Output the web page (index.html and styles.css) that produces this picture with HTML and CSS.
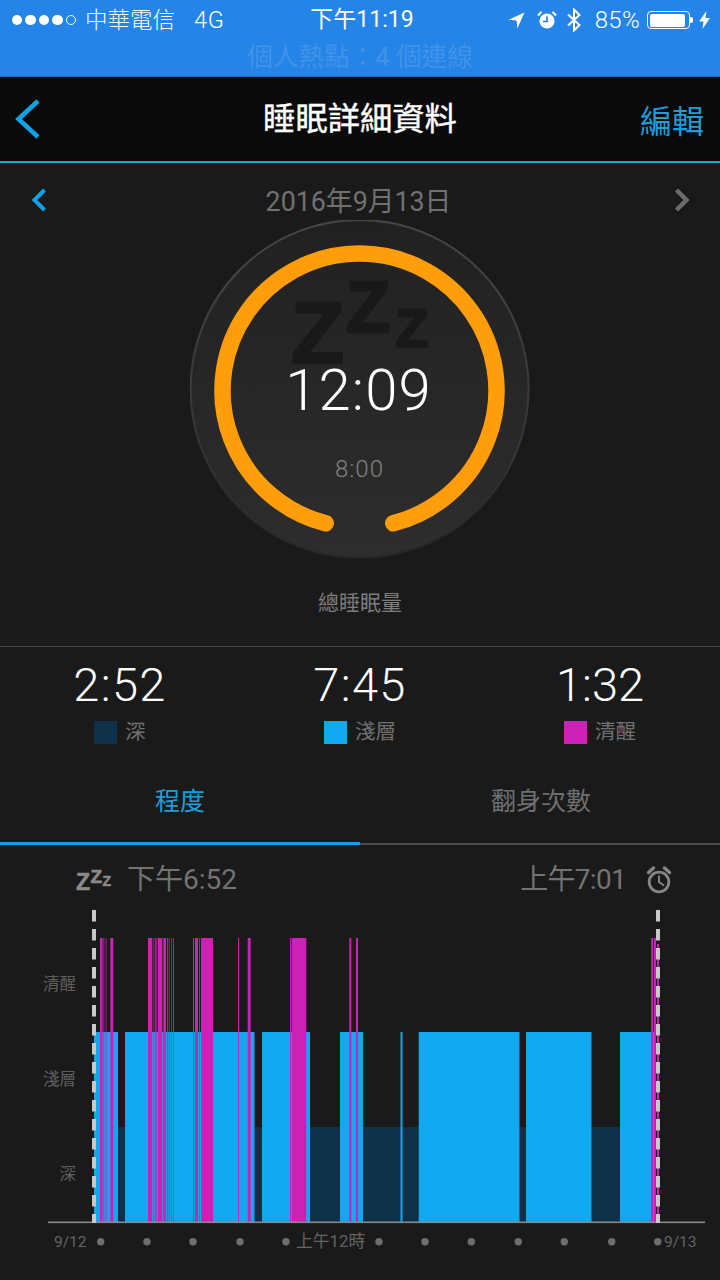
FILE: index.html
```html
<!DOCTYPE html>
<html lang="zh-Hant">
<head>
<meta charset="utf-8">
<title>睡眠詳細資料</title>
<link rel="stylesheet" href="styles.css">
</head>
<body>
<div class="app">
  <header class="system">
    <div class="status">
      <div class="status-left">
        <span class="signal"><i></i><i></i><i></i><i></i><i class="off"></i></span>
        <span class="carrier">中華電信</span>
        <span class="net">4G</span>
      </div>
      <div class="clock">下午11:19</div>
      <div class="status-right">
        <svg class="ic-loc" width="17" height="17" viewBox="0 0 17 17"><path d="M16.500 .5 L.5 7.800 L8.600 8.400 L9.400 16.500 Z" fill="#fff"/></svg>
        <svg class="ic-alarm" width="20" height="20" viewBox="0 0 20 20"><circle cx="10" cy="11" r="7.600" fill="#fff"/><path d="M10 6.500V11.500H6" fill="none" stroke="#2484e8" stroke-width="1.700"/><path d="M1 5.500 L4.500 1.800 M19 5.500 L15.500 1.800" stroke="#fff" stroke-width="2"/></svg>
        <svg class="ic-bt" width="14" height="24" viewBox="0 0 14 24"><path d="M1 6.500 L12.500 17 L7 22.500 V1.500 L12.500 7 L1 17.500" fill="none" stroke="#fff" stroke-width="2"/></svg>
        <span class="pct">85%</span>
        <span class="battery"><span class="battery-fill"></span></span>
        <svg class="ic-bolt" width="11" height="18" viewBox="0 0 11 18"><path d="M7.500 0 L0 10.500 H4.500 L3.500 18 L11 7 H6.500 Z" fill="#fff"/></svg>
      </div>
    </div>
    <div class="hotspot">個人熱點：4 個連線</div>
  </header>

  <nav class="nav">
    <svg width="60" height="84" viewBox="0 0 60 84"><path d="M38 24 L18.500 42 L38 60" fill="none" stroke="#10a2e6" stroke-width="4.600"/></svg>
    <h1 class="title">睡眠詳細資料</h1>
    <span class="edit">編輯</span>
  </nav>

  <section class="date-row">
    <svg width="30" height="30" viewBox="0 0 30 30"><path d="M14.500 5 L4.500 15 L14.500 25" fill="none" stroke="#10a2e6" stroke-width="4"/></svg>
    <span class="date">2016年9月13日</span>
    <svg width="30" height="30" viewBox="0 0 30 30"><path d="M15.500 5 L25.500 15 L15.500 25" fill="none" stroke="#6c6c6c" stroke-width="4.400"/></svg>
  </section>

  <section class="gauge-wrap">
    <div class="gauge">
      <svg class="gauge-art" width="340" height="340" viewBox="0 0 340 340">
        <defs>
          <linearGradient id="face" x1="0" y1="0" x2="0" y2="1"><stop offset="0" stop-color="#212121"/><stop offset="1" stop-color="#2d2d2d"/></linearGradient>
          <linearGradient id="rim" x1="0" y1="0" x2="0" y2="1"><stop offset="0" stop-color="#464646"/><stop offset=".6" stop-color="#383838"/><stop offset="1" stop-color="#262626"/></linearGradient>
        </defs>
        <circle cx="169.600" cy="169" r="169" fill="url(#face)" stroke="url(#rim)" stroke-width="2"/>
        <text class="big-z" x="101" y="143" font-size="87">Z</text>
        <text class="big-z" x="156" y="112" font-size="72">Z</text>
        <text class="big-z" x="205.500" y="127" font-size="54">Z</text>
        <path d="M135.700 303.300 A137 137 0 1 1 203.300 303.300" fill="none" stroke="#ff9d0b" stroke-width="16.500" stroke-linecap="round"/>
      </svg>
      <div class="gauge-text">
        <div class="gauge-time">12:09</div>
        <div class="gauge-goal">8:00</div>
      </div>
    </div>
  </section>
  <div class="total">總睡眠量</div>

  <section class="stats">
    <div class="stat"><div class="stat-value">2:52</div><div class="stat-key"><i class="swatch deep"></i><span>深</span></div></div>
    <div class="stat"><div class="stat-value">7:45</div><div class="stat-key"><i class="swatch light"></i><span>淺層</span></div></div>
    <div class="stat"><div class="stat-value tight">1:32</div><div class="stat-key"><i class="swatch awake"></i><span>清醒</span></div></div>
  </section>

  <div class="tabs">
    <div class="tab active">程度</div>
    <div class="tab">翻身次數</div>
  </div>

  <section class="chart-head">
    <div class="chart-side">
      <svg width="36" height="28" viewBox="0 0 36 28"><g class="small-z"><text x="0" y="24" font-size="23">Z</text><text x="14.500" y="17" font-size="19">Z</text><text x="26.500" y="20" font-size="14">Z</text></g></svg>
      <span>下午6:52</span>
    </div>
    <div class="chart-side">
      <span class="end-time">上午7:01</span>
      <svg width="26" height="30" viewBox="0 0 26 30"><circle cx="13" cy="17" r="9.800" fill="none" stroke="#858585" stroke-width="2.800"/><path d="M13 10.500V17L18 20.500" fill="none" stroke="#858585" stroke-width="2"/><path d="M2.500 7.500 L7.500 3 M23.500 7.500 L18.500 3" stroke="#858585" stroke-width="3.400" stroke-linecap="round"/></svg>
    </div>
  </section>

  <svg class="chart" width="720" height="380" viewBox="0 900 720 380">
    <g class="axis-y">
      <text x="76" y="990">清醒</text>
      <text x="76" y="1085">淺層</text>
      <text x="76" y="1180">深</text>
    </g>
    <rect class="deep-fill" x="118" y="1127" width="502" height="95"/>
    <g class="light-fill">
      <rect x="94" y="1032" width="24" height="190"/>
      <rect x="125" y="1032" width="129.500" height="190"/>
      <rect x="262" y="1032" width="48" height="190"/>
      <rect x="340" y="1032" width="23" height="190"/>
      <rect x="400.500" y="1032" width="2" height="190"/>
      <rect x="418.700" y="1032" width="100.800" height="190"/>
      <rect x="526" y="1032" width="65.500" height="190"/>
      <rect x="620" y="1032" width="34" height="190"/>
    </g>
    <g class="awake-fill">
      <rect x="100" y="938" width="2.600" height="284"/>
      <rect x="103" y="938" width=".8" height="284" opacity=".7"/>
      <rect x="104.500" y="938" width="1" height="284" opacity=".6"/>
      <rect x="106.300" y="938" width=".8" height="284" opacity=".6"/>
      <rect x="110.300" y="938" width="3" height="284"/>
      <rect x="148" y="938" width="4.300" height="284"/>
      <rect x="153" y="938" width=".8" height="284" opacity=".7"/>
      <rect x="154.700" y="938" width="2" height="284" opacity=".8"/>
      <rect x="157.700" y="938" width="4.600" height="284"/>
      <rect x="163.300" y="938" width="2.700" height="284"/>
      <rect x="167" y="938" width=".8" height="284"/>
      <rect x="168.700" y="938" width="1" height="284" opacity=".8"/>
      <rect x="171" y="938" width=".8" height="284" opacity=".8"/>
      <rect x="173" y="938" width="1" height="284" opacity=".8"/>
      <rect x="193" y="938" width="1" height="284"/>
      <rect x="195" y="938" width="3" height="284"/>
      <rect x="199" y="938" width="1" height="284" opacity=".8"/>
      <rect x="201" y="938" width="12" height="284"/>
      <rect x="238" y="938" width="1" height="284"/>
      <rect x="247.700" y="938" width="3" height="284"/>
      <rect x="290" y="938" width="1.300" height="284"/>
      <rect x="292" y="938" width="14.300" height="284"/>
      <rect x="349.300" y="938" width="2" height="284"/>
      <rect x="356" y="938" width="2" height="284"/>
      <rect x="651.200" y="938" width="2" height="284"/>
      <rect x="654" y="938" width="2" height="284"/>
      <rect x="657" y="944" width="2" height="278"/>
    </g>
    <rect class="axis-line" x="48" y="1221.500" width="657" height="1.600"/>
    <line class="marker" x1="94" y1="910" x2="94" y2="1223"/>
    <line class="marker" x1="658" y1="910" x2="658" y2="1223"/>
    <g class="ticks">
      <circle cx="100.700" cy="1241.700" r="3.700"/>
      <circle cx="147" cy="1241.700" r="3.700"/>
      <circle cx="193" cy="1241.700" r="3.700"/>
      <circle cx="240" cy="1241.700" r="3.700"/>
      <circle cx="286" cy="1241.700" r="3.700"/>
      <circle cx="379" cy="1241.700" r="3.700"/>
      <circle cx="425" cy="1241.700" r="3.700"/>
      <circle cx="471.300" cy="1241.700" r="3.700"/>
      <circle cx="518.300" cy="1241.700" r="3.700"/>
      <circle cx="564.300" cy="1241.700" r="3.700"/>
      <circle cx="611.700" cy="1241.700" r="3.700"/>
      <circle cx="657.700" cy="1241.700" r="3.700"/>
    </g>
    <g class="axis-x">
      <text x="54" y="1247">9/12</text>
      <text class="axis-noon" x="296" y="1247">上午12時</text>
      <text x="664" y="1247">9/13</text>
    </g>
  </svg>
</div>
</body>
</html>
```
FILE: styles.css
```css
* { box-sizing: border-box; }
html, body { margin: 0; padding: 0; }
body {
  background: #1a1a1a;
  font-family: "Roboto", "Noto Sans CJK TC", sans-serif;
  font-weight: 300;
  color: #fff;
}
.app { width: 720px; height: 1280px; overflow: hidden; display: flex; flex-direction: column; }

.system { background: #2484e8; height: 77px; border-bottom: 1px solid #1d6cc0; }
.status { height: 40px; display: grid; grid-template-columns: 1fr auto 1fr; align-items: center; padding: 0 10px 0 12px; font-size: 23px; line-height: 40px; }
.status-left, .status-right { display: flex; align-items: center; }
.status-right { justify-content: flex-end; }
.signal { display: flex; gap: 3px; margin-right: 9px; }
.signal i { width: 10.400px; height: 10.400px; border-radius: 50%; background: #fff; }
.signal i.off { background: none; border: 1px solid #fff; }
.carrier { font-size: 22.500px; }
.net { margin-left: 19px; font-size: 23.500px; letter-spacing: .8px; }
.clock { font-weight: 400; margin-left: 2px; }
.ic-loc { margin-right: 12px; margin-left: -2px; }
.ic-alarm { margin-right: 10px; }
.ic-bt { margin-right: 14px; }
.pct { margin-right: 7px; font-size: 24px; letter-spacing: .3px; }
.battery { width: 43px; height: 18px; border: 1px solid #fff; border-radius: 4px; padding: 1.500px; position: relative; margin-right: 9px; }
.battery::after { content: ""; position: absolute; right: -4px; top: 5px; width: 3px; height: 6px; background: #fff; border-radius: 0 2px 2px 0; }
.battery-fill { display: block; width: 35px; height: 13px; background: #fff; border-radius: 2px; }
.hotspot { height: 36px; line-height: 34px; text-align: center; font-size: 25.600px; color: #4193e9; font-weight: 400; }

.nav { height: 86px; background: #0a0a0a; border-bottom: 2px solid #19a2e4; display: grid; grid-template-columns: 1fr auto 1fr; align-items: center; }
.title { margin: 0; font-size: 32.300px; font-weight: 400; line-height: 84px; -webkit-text-stroke: .4px #fff; }
.edit { justify-self: end; margin-right: 16px; font-size: 32px; color: #1a9edd; font-weight: 400; }

.date-row { height: 57px; padding: 16px 29px 0 30px; display: flex; justify-content: space-between; align-items: center; }
.date { font-size: 26.800px; color: #717171; font-weight: 400; margin-left: -4px; }

.gauge-wrap { display: flex; justify-content: center; }
.gauge { width: 340px; height: 340px; display: grid; }
.gauge-art, .gauge-text { grid-area: 1 / 1; }
.big-z { font-family: "Liberation Sans", sans-serif; font-weight: 700; fill: #191919; stroke: #191919; stroke-width: 2.500px; }
.gauge-text { display: flex; flex-direction: column; align-items: center; padding-top: 135px; padding-right: 3px; }
.gauge-time { font-size: 58px; line-height: 70px; letter-spacing: 1.100px; }
.gauge-goal { margin-top: 29px; font-size: 24px; line-height: 30px; color: #808080; letter-spacing: 1px; margin-right: -2px; }

.total { height: 86px; line-height: 86px; text-align: center; font-size: 21px; color: #7c7c7c; font-weight: 400; }

.stats { border-top: 1px solid #474747; display: grid; grid-template-columns: 1fr 1fr 1fr; padding-top: 13px; height: 117px; }
.stat { display: flex; flex-direction: column; align-items: center; }
.stat-value { font-size: 47px; line-height: 50px; letter-spacing: 1.400px; }
.stat-value.tight { letter-spacing: 0; }
.stat-key { display: flex; align-items: center; gap: 8px; margin-top: 10px; font-size: 20.500px; line-height: 24px; color: #717171; font-weight: 400; }
.swatch { width: 23px; height: 23px; }
.deep { background: #0e3049; }
.light { background: #10a8ef; }
.awake { background: #cc21b5; }

.tabs { display: grid; grid-template-columns: 1fr 1fr; height: 82px; }
.tab { text-align: center; font-size: 25px; line-height: 78px; color: #6f6f6f; font-weight: 400; border-bottom: 2px solid #4a4a4a; padding-left: 2px; }
.tab.active { color: #1a9edd; border-bottom: 3px solid #129fe6; padding-left: 0; }

.chart-head { height: 55px; display: flex; justify-content: space-between; align-items: center; padding: 14px 48px 0 76px; }
.chart-side { display: flex; align-items: center; gap: 15px; font-size: 28px; color: #737373; font-weight: 400; line-height: 34px; }
.end-time { letter-spacing: -.7px; margin-right: 5px; }
.small-z { font-family: "Liberation Sans", sans-serif; font-weight: 700; fill: #8a8a8a; stroke: #8a8a8a; stroke-width: .6px; }

.chart { display: block; flex: none; }
.axis-y { font-size: 16.500px; fill: #5f5f5f; text-anchor: end; font-weight: 400; }
.axis-x { font-size: 15.500px; fill: #646464; font-weight: 400; }
.axis-noon { font-size: 16.800px; }
.deep-fill { fill: #0e3049; }
.light-fill { fill: #10a8ef; }
.awake-fill { fill: #cc21b5; }
.axis-line { fill: #8a8a8a; }
.marker { stroke: #c9c9c9; stroke-width: 4; stroke-dasharray: 11.500 7.500; }
.ticks { fill: #6e6e6e; }
```
